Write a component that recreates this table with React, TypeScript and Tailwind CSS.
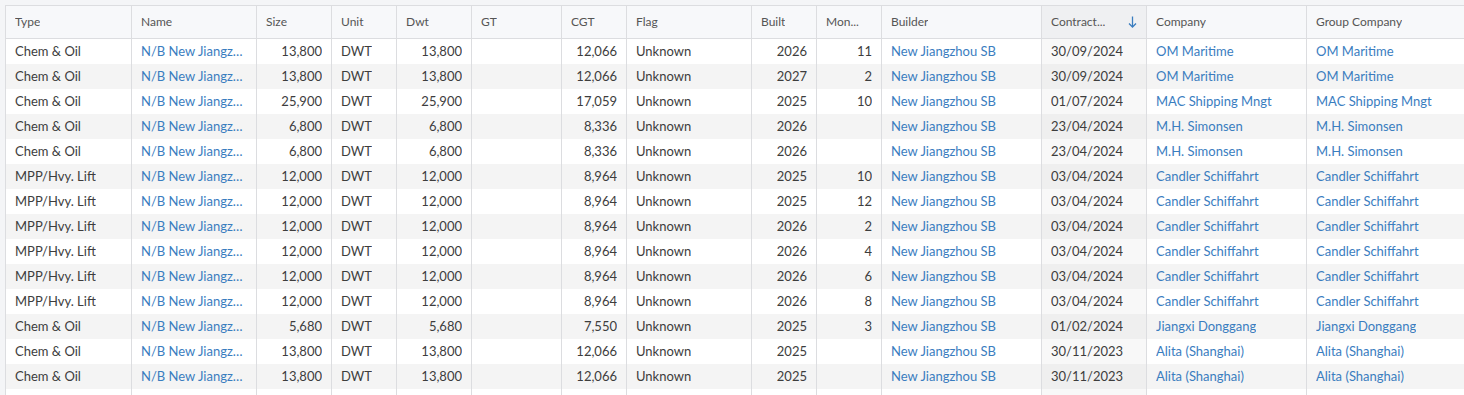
import React from "react";

type Row = {
  type: string;
  name: string;
  size: string;
  dwt: string;
  cgt: string;
  built: string;
  mon: string;
  contract: string;
  company: string;
};

const rows: Row[] = [
  { type: "Chem & Oil", name: "N/B New Jiangzhou 13800 #1", size: "13,800", dwt: "13,800", cgt: "12,066", built: "2026", mon: "11", contract: "30/09/2024", company: "OM Maritime" },
  { type: "Chem & Oil", name: "N/B New Jiangzhou 13800 #2", size: "13,800", dwt: "13,800", cgt: "12,066", built: "2027", mon: "2", contract: "30/09/2024", company: "OM Maritime" },
  { type: "Chem & Oil", name: "N/B New Jiangzhou 25900 #1", size: "25,900", dwt: "25,900", cgt: "17,059", built: "2025", mon: "10", contract: "01/07/2024", company: "MAC Shipping Mngt" },
  { type: "Chem & Oil", name: "N/B New Jiangzhou 6800 #1", size: "6,800", dwt: "6,800", cgt: "8,336", built: "2026", mon: "", contract: "23/04/2024", company: "M.H. Simonsen" },
  { type: "Chem & Oil", name: "N/B New Jiangzhou 6800 #2", size: "6,800", dwt: "6,800", cgt: "8,336", built: "2026", mon: "", contract: "23/04/2024", company: "M.H. Simonsen" },
  { type: "MPP/Hvy. Lift", name: "N/B New Jiangzhou 12000 #1", size: "12,000", dwt: "12,000", cgt: "8,964", built: "2025", mon: "10", contract: "03/04/2024", company: "Candler Schiffahrt" },
  { type: "MPP/Hvy. Lift", name: "N/B New Jiangzhou 12000 #2", size: "12,000", dwt: "12,000", cgt: "8,964", built: "2025", mon: "12", contract: "03/04/2024", company: "Candler Schiffahrt" },
  { type: "MPP/Hvy. Lift", name: "N/B New Jiangzhou 12000 #3", size: "12,000", dwt: "12,000", cgt: "8,964", built: "2026", mon: "2", contract: "03/04/2024", company: "Candler Schiffahrt" },
  { type: "MPP/Hvy. Lift", name: "N/B New Jiangzhou 12000 #4", size: "12,000", dwt: "12,000", cgt: "8,964", built: "2026", mon: "4", contract: "03/04/2024", company: "Candler Schiffahrt" },
  { type: "MPP/Hvy. Lift", name: "N/B New Jiangzhou 12000 #5", size: "12,000", dwt: "12,000", cgt: "8,964", built: "2026", mon: "6", contract: "03/04/2024", company: "Candler Schiffahrt" },
  { type: "MPP/Hvy. Lift", name: "N/B New Jiangzhou 12000 #6", size: "12,000", dwt: "12,000", cgt: "8,964", built: "2026", mon: "8", contract: "03/04/2024", company: "Candler Schiffahrt" },
  { type: "Chem & Oil", name: "N/B New Jiangzhou 5680 #1", size: "5,680", dwt: "5,680", cgt: "7,550", built: "2025", mon: "3", contract: "01/02/2024", company: "Jiangxi Donggang" },
  { type: "Chem & Oil", name: "N/B New Jiangzhou 13800 #3", size: "13,800", dwt: "13,800", cgt: "12,066", built: "2025", mon: "", contract: "30/11/2023", company: "Alita (Shanghai)" },
  { type: "Chem & Oil", name: "N/B New Jiangzhou 13800 #4", size: "13,800", dwt: "13,800", cgt: "12,066", built: "2025", mon: "", contract: "30/11/2023", company: "Alita (Shanghai)" },
  { type: "Chem & Oil", name: "N/B New Jiangzhou 13800 #5", size: "13,800", dwt: "13,800", cgt: "12,066", built: "2025", mon: "", contract: "30/11/2023", company: "Alita (Shanghai)" },
];

const cols =
  "grid grid-cols-[126px_125px_75px_65px_75px_90px_65px_125px_65px_65px_160px_105px_160px_160px]";

const head = "flex min-w-0 items-center h-[33px] px-[9px] border-r border-b border-[#dcdde0] text-[12px] text-[#555]";
const cell = "flex min-w-0 items-center h-[25px] px-[9px] border-r border-[#dcdde0] overflow-hidden whitespace-nowrap";

function SortArrow() {
  return (
    <svg width="9" height="12" viewBox="0 0 9 12" className="shrink-0">
      <path d="M4.5 0.5V11" stroke="#3a7dbf" strokeWidth="1.3" />
      <path d="M1 7.5L4.5 11L8 7.5" stroke="#3a7dbf" strokeWidth="1.3" fill="none" />
    </svg>
  );
}

function Cell({ children, className = "" }: { children?: React.ReactNode; className?: string }) {
  return (
    <div className={`${cell} ${className}`}>
      <span className="truncate">{children}</span>
    </div>
  );
}

export default function App() {
  return (
    <div
      className="h-[395px] w-[1464px] overflow-hidden bg-[#f4f5f7] pl-[5px] pt-[5px] text-[13px] text-[#3d3d3d]"
      style={{ fontFamily: "Lato, 'Open Sans', sans-serif" }}
    >
      <div className="w-max border-l border-t border-[#dcdde0] bg-white">
        <div className={`${cols} bg-[#f7f8fa]`}>
          {["Type", "Name", "Size", "Unit", "Dwt", "GT", "CGT", "Flag", "Built", "Mon..."].map((h) => (
            <div key={h} className={head}>
              <span className="truncate">{h}</span>
            </div>
          ))}
          <div className={head}>
            <span className="truncate">Builder</span>
          </div>
          <div className={`${head} justify-between gap-2 bg-[#eff0f2]`}>
            <span className="truncate">Contract...</span>
            <SortArrow />
          </div>
          <div className={head}>
            <span className="truncate">Company</span>
          </div>
          <div className={head}>
            <span className="truncate">Group Company</span>
          </div>
        </div>
        {rows.map((r, i) => {
          const odd = i % 2 === 1;
          return (
            <div key={i} className={`${cols} ${odd ? "bg-[#f4f4f4]" : "bg-white"}`}>
              <Cell>{r.type}</Cell>
              <Cell className="text-[#3a7dbf]">{r.name}</Cell>
              <Cell className="justify-end">{r.size}</Cell>
              <Cell>DWT</Cell>
              <Cell className="justify-end">{r.dwt}</Cell>
              <Cell />
              <Cell className="justify-end">{r.cgt}</Cell>
              <Cell>Unknown</Cell>
              <Cell className="justify-end">{r.built}</Cell>
              <Cell className="justify-end">{r.mon}</Cell>
              <Cell className="text-[#3a7dbf]">New Jiangzhou SB</Cell>
              <Cell className={odd ? "bg-[#efefef]" : "bg-[#f8f8f8]"}>{r.contract}</Cell>
              <Cell className="text-[#3a7dbf]">{r.company}</Cell>
              <Cell className="text-[#3a7dbf]">{r.company}</Cell>
            </div>
          );
        })}
      </div>
    </div>
  );
}
